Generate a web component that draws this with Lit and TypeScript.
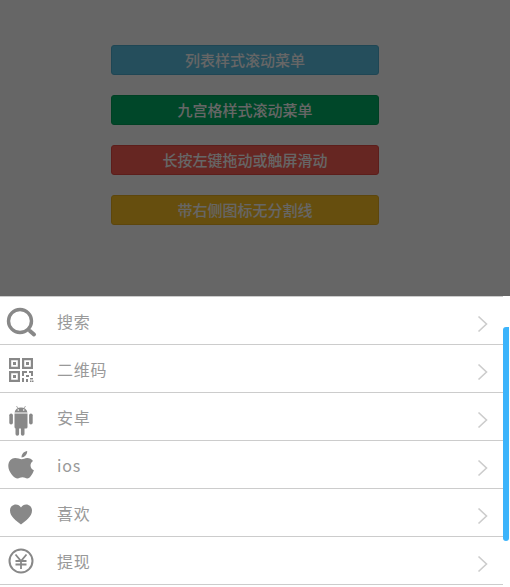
import { LitElement, html, css, svg } from "lit";
import { customElement } from "lit/decorators.js";

const icons = {
  search: svg`<circle cx="20" cy="24" r="11.500" fill="none" stroke="currentColor" stroke-width="3.400"/><path d="M30 34l4 3.500" stroke="currentColor" stroke-width="4" stroke-linecap="round"/>`,
  qr: svg`<path fill-rule="evenodd" d="M9 13h11v11H9zm2.200 2.200v6.600h6.600v-6.600zM13 17h3v3h-3zM22 13h11v11H22zm2.200 2.200v6.600h6.600v-6.600zM26 17h3v3h-3zM9 26h11v11H9zm2.200 2.200v6.600h6.600v-6.600zM13 30h3v3h-3zM22 26h5v2h-3v3h-2zM29 26h4v5h-2v-3h-2zM26 30h3v2h-3zM22 33h2v4h-2zM26 34h2v3h-2zM30 33h3v1.500h-3zM30 35.500h1.500V37H30zM32 35.500h1.500V37H32z"/>`,
  android: svg`<path d="M14.500 19.500a6.700 6.700 0 0 1 13 0zM14.500 20.500h13v13.500a1.500 1.500 0 0 1-1.500 1.500h-1.500v5.500a1.800 1.800 0 0 1-3.600 0v-5.500h-1.800v5.500a1.800 1.800 0 0 1-3.600 0v-5.500H16a1.500 1.500 0 0 1-1.500-1.500z"/><rect x="9.300" y="20.500" width="3.600" height="11" rx="1.800"/><rect x="29.100" y="20.500" width="3.600" height="11" rx="1.800"/><path d="M16.500 13l1.500 2.500M25.500 13L24 15.500" stroke="currentColor" stroke-width=".7"/><circle cx="18.300" cy="17" r=".8" fill="#fff"/><circle cx="23.700" cy="17" r=".8" fill="#fff"/>`,
  apple: svg`<path d="M21.700 18.300c1.500 0 3.200-1.300 5.500-1.300 2.500 0 4.500 1.100 5.800 3-3.600 2.200-3.200 7.700.9 9.300-1.100 3.300-3.800 8.200-6.600 8.200-1.800 0-2.700-1.200-4.800-1.200-2.200 0-3.200 1.200-4.900 1.200C14.300 37.500 8.300 31 8.300 25c0-5 3.400-7.900 6.800-7.900 2.600 0 4.900 1.200 6.600 1.200z"/><path d="M21.500 16.500c-.1-3.400 2.600-6.100 5.700-6.500.2 3.500-2.700 6.400-5.700 6.500z"/>`,
  heart: svg`<path d="M21 35.500C16 31.500 10 27.500 10 21.500c0-3.500 2.700-6 5.800-6 2.200 0 4 1.100 5.200 3 1.200-1.900 3-3 5.200-3 3.100 0 5.800 2.500 5.800 6 0 6-6 10-11 14z"/>`,
  yen: svg`<circle cx="21" cy="24" r="11.500" fill="none" stroke="currentColor" stroke-width="2"/><path d="M15.500 17.500L21 24l5.500-6.500M15.500 24h11M15.500 27.500h11M21 24v8" fill="none" stroke="currentColor" stroke-width="1.800"/>`,
};

@customElement("app-root")
export class AppRoot extends LitElement {
  static styles = css`
    :host { display: block; position: relative; width: 510px; height: 587px; overflow: hidden; background: #fff; font-family: "Noto Sans CJK SC", "Liberation Sans", sans-serif; }
    .top { height: 296px; box-sizing: border-box; padding: 45px 20px 0 0; display: flex; flex-direction: column; align-items: center; gap: 20px; }
    .btn { width: 268px; height: 30px; box-sizing: border-box; border-radius: 3px; border: 1px solid; color: #fff; font-size: 15px; font-weight: 500; line-height: 28px; text-align: center; }
    .blue { background: #5cc3e6; border-color: #4fb0d2; }
    .green { background: #00b266; border-color: #00a058; }
    .red { background: #ff5f55; border-color: #e74c45; }
    .yellow { background: #ffc425; border-color: #e8b020; }
    .overlay { position: absolute; left: 0; top: 0; right: 0; height: 296px; background: rgba(0, 0, 0, .6); }
    .list { width: 503px; border-top: 1px solid #ccc; }
    .row { height: 48px; box-sizing: border-box; border-bottom: 1px solid #ccc; display: flex; align-items: center; color: #999; position: relative; }
    .row svg.ic { width: 42px; height: 48px; color: #888; fill: currentColor; flex: none; }
    .label { margin-left: 15px; font-size: 16px; letter-spacing: .8px; flex: 1; }
    .chev { width: 11px; height: 18px; margin-right: 15px; margin-top: 6px; flex: none; }
    .bar { position: absolute; left: 503px; top: 327px; width: 6px; height: 214px; border-radius: 3px 0 3px 3px; background: #3cb4fb; }
  `;

  render() {
    const rows: [string, keyof typeof icons][] = [["搜索", "search"], ["二维码", "qr"], ["安卓", "android"], ["ios", "apple"], ["喜欢", "heart"], ["提现", "yen"]];
    return html`
      <div class="top">
        <div class="btn blue">列表样式滚动菜单</div>
        <div class="btn green">九宫格样式滚动菜单</div>
        <div class="btn red">长按左键拖动或触屏滑动</div>
        <div class="btn yellow">带右侧图标无分割线</div>
      </div>
      <div class="overlay"></div>
      <div class="list">
        ${rows.map(([t, i]) => html`<div class="row">
          <svg class="ic" viewBox="0 0 42 48">${icons[i]}</svg>
          <span class="label">${t}</span>
          <svg class="chev" viewBox="0 0 11 18"><path d="M1.500 1.500L9.500 9l-8 7.500" fill="none" stroke="#ccc" stroke-width="1.600"/></svg>
        </div>`)}
      </div>
      <div class="bar"></div>
    `;
  }
}
